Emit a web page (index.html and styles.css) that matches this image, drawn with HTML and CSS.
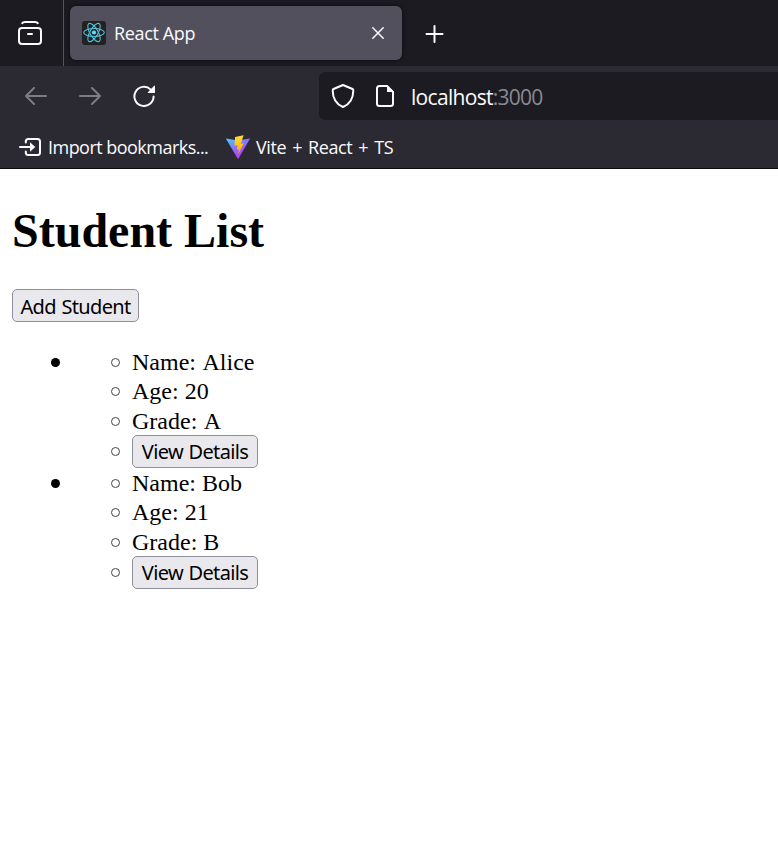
FILE: index.html
```html
<!DOCTYPE html>
<html lang="en">
<head>
<meta charset="utf-8">
<title>React App</title>
<link rel="stylesheet" href="styles.css">
</head>
<body>
<header class="browser">
  <div class="tabs">
    <div class="tab-overview">
      <svg width="24" height="24" viewBox="0 0 24 24" fill="none" stroke="#fbfbfe" stroke-width="2" stroke-linecap="round"><path d="M4.200 2.200Q4.800 1 7 1H17Q19.200 1 19.800 2.200"/><rect x="1" y="7" width="22" height="16" rx="3"/><path d="M10 13h4"/></svg>
    </div>
    <div class="tab">
      <svg class="react" width="24" height="24" viewBox="0 0 24 24"><rect width="24" height="24" rx="3" fill="#222"/><g fill="none" stroke="#53c1de" stroke-width="1.1"><ellipse cx="12" cy="11.5" rx="10.3" ry="4"/><ellipse cx="12" cy="11.5" rx="10.3" ry="4" transform="rotate(60 12 11.5)"/><ellipse cx="12" cy="11.5" rx="10.3" ry="4" transform="rotate(120 12 11.5)"/></g><circle cx="12" cy="11.5" r="2.1" fill="#61dafb"/></svg>
      <span class="tab-title">React App</span>
      <svg class="close" width="12" height="12" viewBox="0 0 12 12" stroke="#fbfbfe" stroke-width="1.5" stroke-linecap="round"><path d="M.8.8l10.4 10.4M11.2.8L.8 11.2"/></svg>
    </div>
    <svg class="plus" width="19" height="18" viewBox="0 0 19 18" stroke="#fbfbfe" stroke-width="2" stroke-linecap="round"><path d="M9.500 1v16M1.500 9h16"/></svg>
  </div>
  <div class="nav">
    <svg class="back" width="22" height="18" viewBox="0 0 22 18" fill="none" stroke="#7d7c83" stroke-width="2" stroke-linecap="round" stroke-linejoin="round"><path d="M9 1L1 9l8 8M1 9h20"/></svg>
    <svg class="forward" width="22" height="18" viewBox="0 0 22 18" fill="none" stroke="#7d7c83" stroke-width="2" stroke-linecap="round" stroke-linejoin="round"><path d="M13 1l8 8-8 8M21 9H1"/></svg>
    <svg class="reload" width="22" height="22" viewBox="0 0 22 22"><path d="M17.6 4.4A9.6 9.6 0 1 0 20.6 11.5" fill="none" stroke="#fbfbfe" stroke-width="2" stroke-linecap="round"/><path d="M21.2.8Q22 .2 22 1.3V7.5Q22 8 21.5 8H15.2Q14.2 8 14.9 7.2Z" fill="#fbfbfe"/></svg>
    <div class="address">
      <svg class="shield" width="24" height="24" viewBox="0 0 24 24" fill="none" stroke="#fbfbfe" stroke-width="2" stroke-linejoin="round"><path d="M12 1L21.500 5Q22.300 5.300 22.300 6.400C22.300 13.500 19.300 19.800 12 23C4.700 19.800 1.700 13.500 1.700 6.400Q1.700 5.300 2.500 5Z"/></svg>
      <svg class="page" width="18" height="22" viewBox="0 0 18 22"><path d="M11 1H3.500Q1 1 1 3.500v15Q1 21 3.500 21h11Q17 21 17 18.500V7z" fill="none" stroke="#fbfbfe" stroke-width="2" stroke-linejoin="round"/><path d="M11 0v7h7z" fill="#fbfbfe"/></svg>
      <div class="url"><span class="host">localhost</span><span class="port">:3000</span></div>
    </div>
  </div>
  <div class="bookmarks">
    <svg class="import" width="22" height="18" viewBox="0 0 22 18"><path d="M6.800 4.500V3.500Q6.800 1 9.300 1h9.200Q21 1 21 3.500v11Q21 17 18.500 17H9.300Q6.800 17 6.800 14.500v-1M1 9h11" fill="none" stroke="#fbfbfe" stroke-width="2" stroke-linecap="round"/><path d="M11 4.300v9.400L16.300 9z" fill="#fbfbfe"/></svg>
    <span class="import-label">Import bookmarks...</span>
    <svg class="vite" width="24" height="24" viewBox="0 0 24 24"><defs><linearGradient id="v" x1="0" y1="0" x2=".65" y2="1"><stop stop-color="#41d1ff"/><stop offset=".55" stop-color="#9068f6"/><stop offset="1" stop-color="#bd34fe"/></linearGradient><linearGradient id="b" x1="0" y1="0" x2="0" y2="1"><stop stop-color="#ffdd35"/><stop offset="1" stop-color="#ffa800"/></linearGradient></defs><path d="M.2 3.500L12 5.500 23.800 3.500Q24 3.500 23.800 4L12.500 23.400Q12 24 11.600 23.400L.1 4Q0 3.500.2 3.500Z" fill="url(#v)"/><path d="M17.600.3L9.100 2 8.400 10.800l3.100-.6-.7 4.700 2.300-.6-1.100 5.200 5.900-11.200-3.100.6z" fill="url(#b)"/></svg>
    <span class="vite-label">Vite + React + TS</span>
  </div>
</header>
<main class="content">
  <h1>Student List</h1>
  <button class="add">Add Student</button>
  <ul class="students">
    <li>
      <ul class="details">
        <li>Name: <span class="value">Alice</span></li>
        <li>Age: 20</li>
        <li>Grade: <span class="value">A</span></li>
        <li class="action"><button>View Details</button></li>
      </ul>
    </li>
    <li>
      <ul class="details">
        <li>Name: Bob</li>
        <li>Age: 21</li>
        <li>Grade: B</li>
        <li class="action"><button>View Details</button></li>
      </ul>
    </li>
  </ul>
</main>
</body>
</html>
```
FILE: styles.css
```css
*, *::before { box-sizing: border-box; }
body { margin: 0; min-height: 100vh; background: #fff; color: #000; font-family: "Liberation Serif", serif; }
svg { display: block; flex: none; }
.browser { height: 169px; background: #2b2a33; border-bottom: 1px solid #0c0c0d; color: #fbfbfe; font: 18px/24px "Open Sans", sans-serif; white-space: nowrap; }
.tabs { height: 66px; display: flex; align-items: center; background: #1c1b22; }
.tab-overview { width: 64px; height: 66px; padding: 21px 0 0 18px; border-right: 1px solid #55545c; }
.tab { width: 332px; height: 54px; margin-left: 6px; padding: 0 18px 0 12px; display: flex; align-items: center; border-radius: 6px; background: #52505d; box-shadow: 0 0 4px #0b0b10; }
.tab-title { margin-left: 8px; letter-spacing: -.35px; }
.close { margin-left: auto; }
.plus { margin: 2px 0 0 23px; }
.nav { height: 60px; display: flex; align-items: center; padding-left: 25px; }
.forward { margin-left: 32px; }
.reload { margin-left: 32px; }
.address { width: 459px; height: 48px; margin-left: auto; padding-left: 12px; display: flex; align-items: center; border-radius: 6px 0 0 6px; background: #1c1b22; font-size: 21px; }
.page { margin: 0 17px 0 21px; }
.url { padding-top: 2px; }
.host { letter-spacing: -.68px; }
.port { color: #8b8a91; letter-spacing: -.8px; }
.bookmarks { height: 42px; display: flex; align-items: center; padding-left: 19px; }
.import-label { margin-left: 7px; width: 160px; letter-spacing: -.53px; }
.vite { margin-left: 18px; }
.vite-label { margin-left: 6px; letter-spacing: -.4px; word-spacing: 1.7px; }
.content { padding: 34px 12px 0; font-size: 24px; }
h1 { margin: 0 0 30px; font-size: 48px; line-height: 56px; }
button { display: block; width: 126px; height: 33px; padding: 1px 0 0; border: 1px solid #8f8f9d; border-radius: 5px; background: #e9e9ed; color: #000; font: 20px/30px "Noto Sans", sans-serif; letter-spacing: -.65px; word-spacing: 1px; white-space: nowrap; }
.add { width: 127px; padding-top: 2px; }
ul { margin: 0; padding: 0; list-style: none; }
.students { margin-top: 25px; padding-left: 60px; }
.students > li, .details > li { position: relative; }
.students > li::before { content: ""; position: absolute; left: -21px; top: 11px; width: 9px; height: 9px; border-radius: 50%; background: #000; }
.details { padding-left: 60px; }
.details > li { height: 29px; line-height: 30px; }
.details > li:nth-child(2) { height: 30px; }
.details > li::before { content: ""; position: absolute; left: -21px; top: 11px; width: 9px; height: 9px; border: 1px solid #444; border-radius: 50%; }
.value { margin-left: .5px; }
.details > .action { height: 33px; }
.details > .action::before { top: 12px; }
```
